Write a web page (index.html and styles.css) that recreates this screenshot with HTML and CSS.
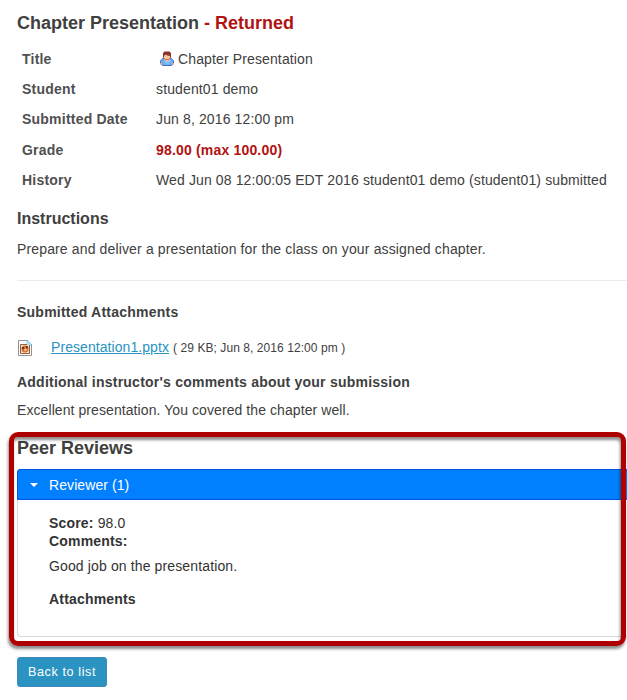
FILE: index.html
```
<!DOCTYPE html>
<html lang="en">
<head>
<meta charset="utf-8">
<title>Chapter Presentation - Returned</title>
<link rel="stylesheet" href="styles.css">
</head>
<body>
<main class="page">
  <h1 class="heading">Chapter Presentation <span class="status">- Returned</span></h1>
  <dl class="summary">
    <dt>Title</dt>
    <dd class="with-icon">
      <svg class="user-icon" width="16" height="16" viewBox="0 0 16 16">
        <path d="M1.500 12V10l2-2.500h9l2 2.500v2l-2 2.500h-9z" fill="#6fb0f5" stroke="#3b62ad" stroke-width=".9"/>
        <path d="M5 11l3-2.500 4 1L9 13z" fill="#8cc6ff"/>
        <path d="M5 7h6v2L8 10.500 5 9z" fill="#f6b48d"/>
        <path d="M4.500 3h7v3.500L10 8.500H6L4.500 6.500z" fill="#f9c4a2" stroke="#b06a4e" stroke-width=".8"/>
        <path d="M4 6.500V2L5.500.5h5L12 2v4.500h-1V5L8.500 4.500 6.500 3.500 5 5v1.500z" fill="#8a3526"/>
        <path d="M1 12h2v1.500H1zM13 12h2v1.500h-2z" fill="#efa17c"/>
      </svg>
      <span>Chapter Presentation</span>
    </dd>
    <dt>Student</dt><dd>student01 demo</dd>
    <dt>Submitted Date</dt><dd>Jun 8, 2016 12:00 pm</dd>
    <dt>Grade</dt><dd class="grade">98.00 (max 100.00)</dd>
    <dt>History</dt><dd class="history">Wed Jun 08 12:00:05 EDT 2016 student01 demo (student01) submitted</dd>
  </dl>
  <h2 class="subheading">Instructions</h2>
  <p class="text">Prepare and deliver a presentation for the class on your assigned chapter.</p>
  <hr class="rule">
  <h3 class="label submitted">Submitted Attachments</h3>
  <div class="attachment">
    <svg class="file-icon" width="14" height="16" viewBox="0 0 14 16">
      <path d="M.5.500h9l4 4v11H.5z" fill="#fff" stroke="#929292"/>
      <path d="M9 0l5 5H9z" fill="#c5ecfb" stroke="#58b9e4" stroke-width=".8"/>
      <path d="M2.500 4.500h9v9h-9z" fill="#fbe3c8" stroke="#9b5b35"/>
      <path d="M9 1h1l3 3v1H9z" fill="#a9dff7"/>
      <circle cx="7" cy="9" r="3.600" fill="#c97438"/>
      <path d="M4 7h2v2H4zM8 6h2v2H8z" fill="#69351f"/>
      <path d="M5.500 10.500l2-2 1.500 1-1 1.500z" fill="#ffc795"/>
    </svg>
    <a class="file-link" href="#">Presentation1.pptx</a>
    <span class="file-meta">( 29 KB; Jun 8, 2016 12:00 pm )</span>
  </div>
  <h3 class="label">Additional instructor's comments about your submission</h3>
  <p class="text feedback">Excellent presentation. You covered the chapter well.</p>
  <section class="reviews">
    <h2 class="heading">Peer Reviews</h2>
    <div class="accordion">
      <div class="accordion-head"><span class="caret"></span>Reviewer (1)</div>
      <div class="accordion-body">
        <div><b>Score:</b> 98.0</div>
        <div><b>Comments:</b></div>
        <p class="comment">Good job on the presentation.</p>
        <div><b>Attachments</b></div>
      </div>
    </div>
    <div class="highlight"></div>
  </section>
  <button class="back" type="button">Back to list</button>
</main>
</body>
</html>
```
FILE: styles.css
```
* { box-sizing: border-box; }
body {
  margin: 0;
  overflow: hidden;
  background: #fff;
  color: #404040;
  font: 14px/30px "Liberation Sans", Arial, sans-serif;
  letter-spacing: .13px;
}
.page { padding: 8px 0 0 17px; }
h1, h2, h3, p, dl, dd { margin: 0; }
.heading { font-size: 18px; line-height: 30px; letter-spacing: 0; }
.status, .grade { color: #b11212; }
.summary {
  display: grid;
  grid-template-columns: 134px 1fr;
  grid-template-rows: 30px 30px 31px 30px 30px;
  margin-top: 6px;
  padding-left: 5px;
  white-space: nowrap;
}
.summary dt { font-weight: bold; color: #505050; letter-spacing: .22px; }
.grade { font-weight: bold; letter-spacing: .18px; }
.history { letter-spacing: .12px; }
.with-icon { display: flex; padding-left: 3px; gap: 3px; }
.user-icon { margin-top: 7px; }
.subheading { margin-top: 9px; font-size: 16px; letter-spacing: 0; }
.text { letter-spacing: .14px; }
.rule { height: 1px; margin: 16px 0 0; border: 0; background: #ebebeb; width: 610px; }
.label { font-size: 14px; letter-spacing: .23px; }
.submitted { margin-top: 16px; }
.attachment { display: flex; height: 35px; margin-bottom: 5px; padding: 5px 0 0 1px; white-space: nowrap; }
.file-icon { margin: 8px 19px 0 0; }
.file-link { color: #2a93c1; letter-spacing: .07px; text-decoration: underline; }
.file-meta { margin: 1px 0 0 4px; font-size: 12px; letter-spacing: .07px; }
.feedback { margin-top: -2px; letter-spacing: .08px; }
.reviews { position: relative; margin-top: 8px; height: 204px; }
.accordion { margin-top: 6px; width: 640px; }
.accordion-head {
  display: flex;
  align-items: center;
  height: 31px;
  padding-left: 12px;
  border: 1px solid #0353e0;
  border-radius: 3px 3px 0 0;
  background: #007fff;
  color: #fff;
  letter-spacing: .08px;
}
.caret {
  width: 8px;
  margin-right: 11px;
  border: 4px solid transparent;
  border-top-color: #fff;
  border-bottom: 0;
}
.accordion-body {
  height: 137px;
  padding: 14px 31px;
  border: 1px solid #d8d8d8;
  border-top: 0;
  border-radius: 0 0 4px 4px;
  color: #333;
  line-height: 18px;
}
.accordion-body b { letter-spacing: .18px; }
.comment { margin: 7px 0 15px; }
.highlight {
  position: absolute;
  top: -1px;
  left: -8px;
  width: 617px;
  height: 214px;
  border: 5px solid #ae0000;
  border-radius: 9px;
  box-shadow: -1px 3px 3px rgba(0, 0, 0, .45), inset -1px 3px 3px rgba(0, 0, 0, .45);
}
.back {
  display: block;
  width: 90px;
  height: 30px;
  margin-top: 20px;
  padding: 0;
  border: 1px solid #3c87bd;
  border-radius: 3px;
  background: #2a93c1;
  color: #fff;
  font: 12.6px/28px "Liberation Sans", Arial, sans-serif;
  letter-spacing: .6px;
}
```
